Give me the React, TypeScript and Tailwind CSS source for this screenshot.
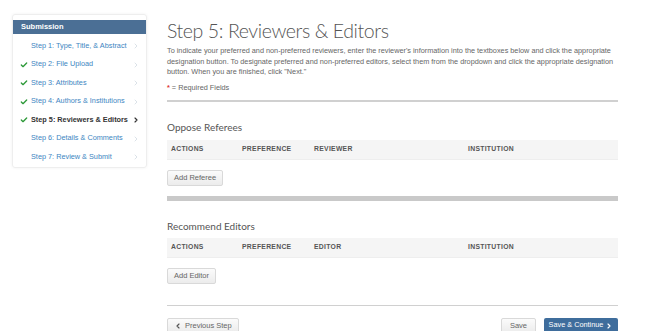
import { Check, ChevronLeft, ChevronRight } from 'lucide-react';

const STEPS = [
  { label: 'Step 1: Type, Title, & Abstract', done: false },
  { label: 'Step 2: File Upload', done: true },
  { label: 'Step 3: Attributes', done: true },
  { label: 'Step 4: Authors & Institutions', done: true },
  { label: 'Step 5: Reviewers & Editors', done: true, active: true },
  { label: 'Step 6: Details & Comments', done: false },
  { label: 'Step 7: Review & Submit', done: false },
];

function SideNav() {
  return (
    <aside className="mt-[14px] ml-[12px] w-[135px] h-[154px] shrink-0 border border-[#eeeeee] rounded-[3px] shadow-[0_0_3px_rgba(0,0,0,0.06)]">
      <div className="mt-[5px] h-[14px] bg-[#4b6f95] text-white text-[7.5px] font-bold flex items-center pl-[8px]">
        Submission
      </div>
      <ul className="m-0 p-0 list-none mt-[3px]">
        {STEPS.map((step) => (
          <li
            key={step.label}
            className={`flex items-center h-[18.5px] pl-[7px] pr-[6px] text-[7.3px] ${
              step.active ? 'text-[#333] font-bold' : 'text-[#3d86c2]'
            }`}
          >
            <span className="w-[11px] flex items-center">
              {step.done && <Check size={8} strokeWidth={4} className="text-[#2e9a3a]" />}
            </span>
            <span className="flex-1 truncate">{step.label}</span>
            <ChevronRight
              size={8}
              strokeWidth={step.active ? 3.5 : 2}
              className={step.active ? 'text-[#333]' : 'text-[#c9d3dd]'}
            />
          </li>
        ))}
      </ul>
    </aside>
  );
}

function TableHead({ third }: { third: string }) {
  return (
    <div className="h-[20px] bg-[#f5f5f5] border-b border-[#eeeeee] flex items-center text-[6.8px] font-bold tracking-[0.3px] text-[#555]">
      <span className="w-[75px] pl-[4px]">ACTIONS</span>
      <span className="w-[72px]">PREFERENCE</span>
      <span className="w-[154px]">{third}</span>
      <span>INSTITUTION</span>
    </div>
  );
}

function GrayButton({ children, className = '' }: { children: React.ReactNode; className?: string }) {
  return (
    <button
      type="button"
      className={`h-[16px] px-[6px] bg-gradient-to-b from-[#fbfbfb] to-[#ececec] border border-[#d9d9d9] rounded-[2px] text-[7.5px] text-[#666] flex items-center ${className}`}
    >
      {children}
    </button>
  );
}

export default function App() {
  return (
    <div className="w-[650px] h-[331px] overflow-hidden bg-white flex font-['Liberation_Sans',Arial,sans-serif]">
      <SideNav />

      <main className="ml-[20px] w-[451px] shrink-0">
        <h1 className="mt-[18px] text-[19.5px] leading-[25px] tracking-[-0.4px] font-light text-[#555] font-['Lato',sans-serif]">
          Step 5: Reviewers &amp; Editors
        </h1>
        <p className="mt-[3px] text-[7.3px] leading-[10.5px] text-[#666]">
          To indicate your preferred and non-preferred reviewers, enter the reviewer's information into the textboxes below and click the appropriate
          designation button. To designate preferred and non-preferred editors, select them from the dropdown and click the appropriate designation
          button. When you are finished, click "Next."
        </p>
        <p className="mt-[5px] text-[7.3px] leading-[10px] text-[#666]">
          <span className="text-[#d33] font-bold">*</span> = Required Fields
        </p>
        <div className="mt-[7px] h-[2px] bg-[#d0d0d0]" />

        <h2 className="mt-[19px] text-[10px] leading-[13px] text-[#555] font-['Lato',sans-serif]">Oppose Referees</h2>
        <div className="mt-[6px]">
          <TableHead third="REVIEWER" />
        </div>
        <GrayButton className="mt-[10px]">Add Referee</GrayButton>
        <div className="mt-[10px] h-[5px] bg-[#c9c9c9]" />

        <h2 className="mt-[19px] text-[10px] leading-[13px] text-[#555] font-['Lato',sans-serif]">Recommend Editors</h2>
        <div className="mt-[5px]">
          <TableHead third="EDITOR" />
        </div>
        <GrayButton className="mt-[10px]">Add Editor</GrayButton>
        <div className="mt-[21px] h-[1.5px] bg-[#d0d0d0]" />

        <div className="mt-[12px] flex items-start">
          <GrayButton className="gap-[3px] !h-[15px]">
            <ChevronLeft size={8} strokeWidth={3.5} className="text-[#555]" />
            Previous Step
          </GrayButton>
          <div className="flex-1" />
          <GrayButton className="!h-[15px] !px-[8px]">Save</GrayButton>
          <button
            type="button"
            className="ml-[8px] h-[15px] w-[74px] bg-[#3f6d9c] text-white text-[7.3px] flex items-center justify-center gap-[2px] rounded-[2px]"
          >
            Save &amp; Continue
            <ChevronRight size={8} strokeWidth={3.5} />
          </button>
        </div>
      </main>
    </div>
  );
}
